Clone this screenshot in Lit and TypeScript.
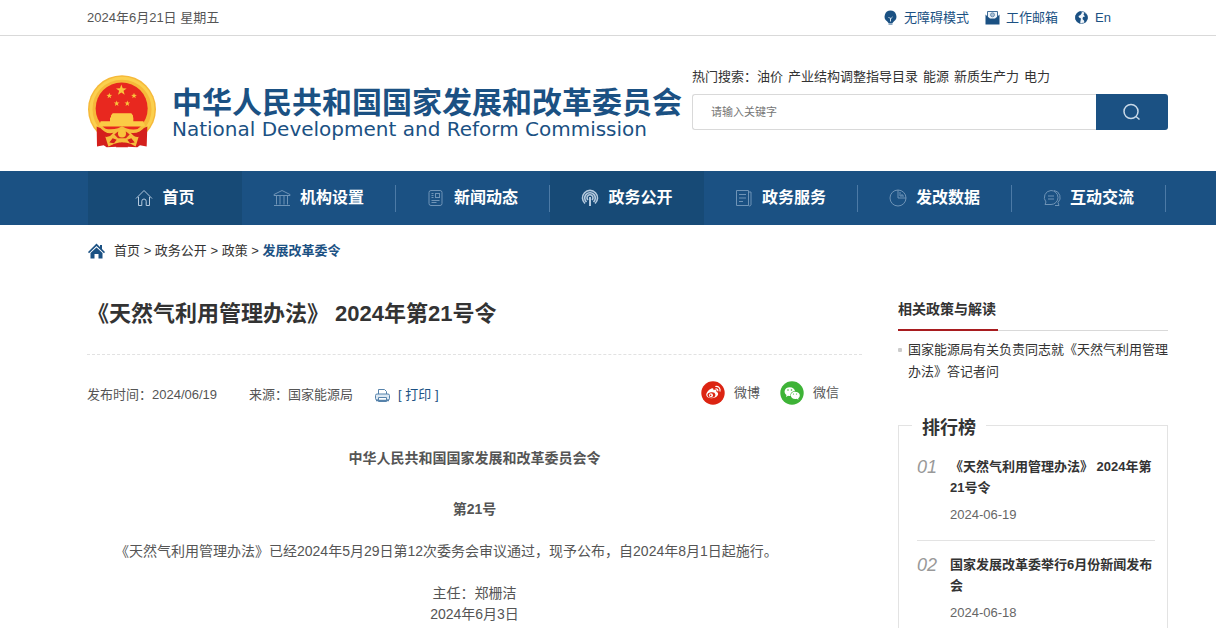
import { LitElement, html, css, svg } from "lit";
import { customElement } from "lit/decorators.js";
import { classMap } from "lit/directives/class-map.js";

const STAR = "M0-10 2.4-3.2 9.5-3.1 3.8 1.2 5.9 8.1 0 4 -5.9 8.1 -3.8 1.2 -9.5-3.1 -2.4-3.2Z";

const star = (x: number, y: number, s: number) =>
  svg`<path d=${STAR} fill="#f9c43c" transform="translate(${x} ${y}) scale(${s})"/>`;

const emblem = html`<svg class="emblem" viewBox="0 0 204 218" role="img" aria-label="国徽">
  <circle cx="102" cy="102" r="102" fill="#f6b93a"/>
  <circle cx="102" cy="102" r="93" fill="none" stroke="#fbd04e" stroke-width="9"/>
  <circle cx="101" cy="100" r="78" fill="#e8281f"/>
  ${star(100, 45, 1.7)}${star(64, 62, 0.9)}${star(138, 62, 0.9)}${star(86, 85, 0.9)}${star(118, 85, 0.9)}
  <path d="M74 114h56l5 7v6H69v-6z M66 127h70v12H66z M38 138h128l6 16H32z" fill="#fbcb45"/>
  <path d="M26 154c20 10 38 14 55 12l21-10 21 10c18 2 36-3 55-12l-2 60-20-4-8 6-46-2-46 2-9-6-20 4z" fill="#d41f1c"/>
  <path d="M34 153c22 12 40 11 56 6l12-6 12 6c18 6 38 5 58-6-12 16-28 23-44 20 8 10 16 14 24 12l-9 29c-12-6-18-12-41-12s-29 8-41 12l-9-29c10 1 16-2 24-12-16 4-30-2-42-20z" fill="#f6bd3d"/>
  <path d="M79 178l10-8h26l10 8-11 11H90z" fill="#d92a1d"/>
  <circle cx="102" cy="175" r="12" fill="#f9c43c"/>
  <path d="M74 189l12 5-8 10-14-2z M130 189l-12 5 8 10 14-2z M86 208l16-6 16 6 2 8H84z" fill="#d41f1c"/>
</svg>`;

const bulb = html`<svg class="ico" viewBox="0 0 15 15" aria-hidden="true">
  <path d="M7.500.5a6 6 0 0 0-3.500 10.800L5.500 13h4l1.500-1.700A6 6 0 0 0 7.500.5z" fill="#1b5183"/>
  <path d="M5.500 7l1.300 1.300h1.400L9.500 7M7.500 8.500v3" stroke="#dbe6f0" fill="none"/>
  <path d="M5.500 14h4" stroke="#1b5183"/></svg>`;

const mail = html`<svg class="ico" viewBox="0 0 15 15" aria-hidden="true">
  <path d="M2.500 8V1.500h10V8" fill="#eef4fa" stroke="#3f6d98"/>
  <circle cx="7.500" cy="4.800" r="2" fill="#a9bfd4" stroke="#6d8fb1"/>
  <path d="M.5 4.500l2 2 2.500 2h5l2.500-2 2-2v10H.5z" fill="#1b5183"/></svg>`;

const globe = html`<svg class="ico" viewBox="0 0 15 15" aria-hidden="true">
  <circle cx="7.500" cy="7.500" r="6" fill="#f2f6fa" stroke="#5b82a8"/>
  <path d="M1.200 7.500A6.300 6.300 0 0 1 7 1.200l1 1.500L6.500 5l-2 1 .5 1.500 2 1-.5 2.500-.5 2.500C3 12.800 1.200 10 1.200 7.500z M10.500 2.500l2.500 2.500.8 3-1.800 4-1.500 1-.5-2.500-1.500-1.500.5-2 2-.5L9.500 4.500z" fill="#1b5183"/></svg>`;

const navIcons = {
  home: svg`<path d="M1 9.500L9 1.500l8 8M3.500 8v8.500h3.300v-4.300a2.200 2.200 0 0 1 4.400 0v4.300h3.300V8"/>`,
  bank: svg`<path d="M1 5.500L9 1.500l8 4v1H1zM3.500 7v8.500M7 7v8.500M11 7v8.500M14.500 7v8.500M1 16.500h16"/>`,
  news: svg`<rect x="2" y="1.500" width="13" height="15" rx="2"/><rect x="8.500" y="4.500" width="4" height="4"/><path d="M4.500 4.500h2M4.500 6.500h2M4.500 8.500h2M4.500 11.500h8M4.500 13.500h5"/>`,
  signal: svg`<path d="M4 14.500a7.500 7.500 0 1 1 10 0M5.500 13a5.300 5.300 0 1 1 7 0M7 11a3 3 0 1 1 4 0" stroke-width="1.600"/><path d="M9 8v9" stroke-width="2"/>`,
  paper: svg`<path d="M1.500 1.500h12v15h-12zM13.500 3H16v12a1.500 1.500 0 0 1-2.500 1.500M4 5.500h7M4 9h7M4 12.500h4"/>`,
  pie: svg`<circle cx="9" cy="9" r="8"/><path d="M9 1v8h8M11 3v4h4M13 5v2"/>`,
  chat: svg`<path d="M8 1.500a7 7 0 1 1 0 14H2l1-2.500a7 7 0 0 1 5-11.500zM5 7h6M5 10h6M11 1.500a7 7 0 0 1 4 12l1 3h-4"/>`,
};

const NAV: { text: string; icon: keyof typeof navIcons; on?: boolean }[] = [
  { text: "首页", icon: "home", on: true },
  { text: "机构设置", icon: "bank" },
  { text: "新闻动态", icon: "news" },
  { text: "政务公开", icon: "signal", on: true },
  { text: "政务服务", icon: "paper" },
  { text: "发改数据", icon: "pie" },
  { text: "互动交流", icon: "chat" },
];

const HOT = ["油价", "产业结构调整指导目录", "能源", "新质生产力", "电力"];

const RANK = [
  { title: "《天然气利用管理办法》 2024年第21号令", date: "2024-06-19" },
  { title: "国家发展改革委举行6月份新闻发布会", date: "2024-06-18" },
];

const base = css`
  * { box-sizing: border-box; margin: 0; padding: 0; }
  a { color: inherit; text-decoration: none; }
  ul, ol { list-style: none; }
`;

@customElement("site-header")
class SiteHeader extends LitElement {
  static styles = [base, css`
    :host { display: block; }
    .top { display: flex; align-items: center; height: 36px; padding: 0 105px 0 87px; border-bottom: 1px solid #d9d9d9; color: #555; }
    .tools { display: flex; gap: 16px; margin-left: auto; color: #1b5183; }
    .tools a { display: flex; align-items: center; gap: 6px; }
    .ico { width: 15px; height: 15px; }
    .head { display: flex; align-items: flex-start; justify-content: space-between; height: 135px; padding: 32px 48px 0 88px; }
    .logo { display: flex; gap: 16px; padding-top: 7px; white-space: nowrap; color: #1b5183; }
    .emblem { width: 68px; height: 73px; }
    .names { padding-top: 13px; }
    .cn { font-size: 30px; line-height: 30px; font-weight: 700; }
    .en { font: 20px/22px "DejaVu Sans", sans-serif; }
    .search { width: 476px; flex: none; }
    .hot { display: flex; gap: 5px; line-height: 18px; margin-bottom: 8px; color: #333; }
    .hot span { margin-right: -5px; }
    form { display: flex; height: 36px; }
    input { flex: 1; min-width: 0; border: 1px solid #d9d9d9; border-right: 0; border-radius: 3px 0 0 3px; padding: 0 18px; font: inherit; font-size: 11px; outline: 0; }
    input::placeholder { color: #757575; }
    button { width: 72px; border: 0; border-radius: 0 3px 3px 0; background: #1b5183; display: grid; place-items: center; }
    button svg { width: 18px; height: 18px; }
    nav { background: #1b5183; padding: 0 48px 0 88px; }
    .menu { display: flex; }
    .menu li { flex: 0 1 154px; height: 54px; display: flex; align-items: center; }
    .menu li.on { background: #174a76; }
    .menu a { flex: 1; display: flex; align-items: center; justify-content: center; gap: 9px; color: #fff; font-size: 16px; font-weight: 700; white-space: nowrap; }
    .menu li:not(.on)::after { content: ""; width: 1px; height: 27px; background: #4c7aa6; }
    .menu svg { width: 18px; height: 18px; fill: none; stroke: #6f94b7; }
    .menu .on svg { stroke: #b5cadf; }
  `];
  render() {
    return html`
      <div class="top">
        <span>2024年6月21日 星期五</span>
        <div class="tools">
          <a href="#">${bulb}无障碍模式</a><a href="#">${mail}工作邮箱</a><a href="#">${globe}En</a>
        </div>
      </div>
      <header class="head">
        <a class="logo" href="#">${emblem}
          <div class="names">
            <div class="cn">中华人民共和国国家发展和改革委员会</div>
            <div class="en">National Development and Reform Commission</div>
          </div>
        </a>
        <div class="search">
          <div class="hot"><span>热门搜索：</span>${HOT.map((h) => html`<a href="#">${h}</a>`)}</div>
          <form @submit=${(e: Event) => e.preventDefault()}>
            <input type="text" aria-label="搜索" placeholder="请输入关键字">
            <button aria-label="搜索"><svg viewBox="0 0 18 18" fill="none" stroke="#c9d9e8" stroke-width="1.500"><circle cx="8" cy="8.500" r="7"/><path d="M13 13.500l3.500 3"/></svg></button>
          </form>
        </div>
      </header>
      <nav aria-label="主导航"><ul class="menu">
        ${NAV.map((n) => html`<li class=${classMap({ on: !!n.on })}>
          <a href="#"><svg viewBox="0 0 18 18" aria-hidden="true">${navIcons[n.icon]}</svg>${n.text}</a></li>`)}
      </ul></nav>`;
  }
}

@customElement("article-view")
class ArticleView extends LitElement {
  static styles = [base, css`
    :host { display: block; color: #555; }
    h1 { color: #333; font-size: 22px; line-height: 32px; padding-bottom: 24px; border-bottom: 1px dashed #e2e2e2; }
    .meta { display: flex; align-items: center; height: 76px; padding-right: 23px; line-height: 20px; }
    .info { display: flex; align-items: center; padding-top: 4px; }
    .source { margin-left: 32px; }
    .print { display: flex; align-items: center; gap: 8px; margin-left: 22px; color: #1b5183; }
    .print svg { width: 15px; height: 15px; }
    .share { display: flex; gap: 20px; margin-left: auto; }
    .share a { display: flex; align-items: center; gap: 9px; }
    .share svg { width: 24px; height: 24px; }
    .body { font-size: 14px; line-height: 21px; padding-top: 17px; text-align: center; }
    .body h2 { font-size: 14px; }
    .num { margin: 30px 0 21px; font-weight: 700; }
    .text { text-align: left; text-indent: 28px; margin-bottom: 21px; }
  `];
  render() {
    return html`
      <h1>《天然气利用管理办法》 2024年第21号令</h1>
      <div class="meta">
        <div class="info">
          <span>发布时间：2024/06/19</span><span class="source">来源：国家能源局</span>
          <a class="print" href="#"><svg viewBox="0 0 15 15" fill="none" stroke="#5783ab" aria-hidden="true"><path d="M3.500 6V1.500h6l2 2V6" fill="#fff"/><rect x=".5" y="6" width="14" height="6" rx="1.500" fill="#dce8f3"/><path d="M3.500 9.500h8v4h-8z" fill="#fff"/><path d="M1 12.500h13" stroke-width="1.500"/></svg>[ 打印 ]</a>
        </div>
        <div class="share">
          <a href="#"><svg viewBox="0 0 24 24" aria-hidden="true"><circle cx="12" cy="12" r="11.700" fill="#dc2412"/>
            <path d="M10.500 7.500c1.500-.5 2.300.2 1.900 1.700 2-.8 3.600-.2 3 1.500 3 1.300 1.800 4.300-.8 5.600-3.500 1.700-8.800 1.200-9.300-2-.4-2.500 2.800-6 5.200-6.800z" fill="#fff"/>
            <ellipse cx="10.400" cy="14" rx="4" ry="2.800" transform="rotate(-8 10.400 14)" fill="#dc2412"/><circle cx="10" cy="14.200" r="2" fill="#fff"/><circle cx="9.600" cy="14.400" r=".8" fill="#dc2412"/>
            <path d="M14.300 5.500c3.300-.5 5.500 2 4.600 5M14.500 7.800c1.700-.2 2.700 1 2.200 2.400" fill="none" stroke="#fff" stroke-width="1.200"/></svg>微博</a>
          <a href="#"><svg viewBox="0 0 24 24" aria-hidden="true"><circle cx="12" cy="12" r="11.700" fill="#3eb337"/>
            <path d="M9.800 6.300c3 0 5 1.800 5.200 4-3 0-5 2-4.500 4.700-.9.100-1.600 0-2.400-.2L6 16l.5-2C3 11.500 4.500 6.300 9.800 6.300z" fill="#fff"/>
            <path d="M15 10.700c5 0 6.200 4.500 3.200 6.500l.3 1.500-1.700-.9c-3.300.8-6-1-6-3.500 0-2 1.700-3.600 4.200-3.600z" fill="#fff"/>
            <g fill="#3eb337"><circle cx="8" cy="9" r=".8"/><circle cx="11.500" cy="9" r=".8"/><circle cx="13.500" cy="13" r=".6"/><circle cx="16.500" cy="13" r=".6"/></g></svg>微信</a>
        </div>
      </div>
      <div class="body">
        <h2>中华人民共和国国家发展和改革委员会令</h2>
        <p class="num">第21号</p>
        <p class="text">《天然气利用管理办法》已经2024年5月29日第12次委务会审议通过，现予公布，自2024年8月1日起施行。</p>
        <p>主任：郑栅洁</p>
        <p>2024年6月3日</p>
      </div>`;
  }
}

@customElement("side-panel")
class SidePanel extends LitElement {
  static styles = [base, css`
    :host { display: flex; flex-direction: column; color: #333; }
    .related { display: flex; border-bottom: 1px solid #d9d9d9; }
    .related h2 { font-size: 14px; line-height: 20px; padding: 0 2px 10px 0; margin-bottom: -1px; border-bottom: 2px solid #a81c1f; }
    .links { line-height: 22px; padding-top: 8px; }
    .links li { display: flex; gap: 6px; }
    .links li::before { content: ""; flex: none; width: 4px; height: 4px; margin-top: 9px; border-radius: 1px; background: #ccc; }
    .rank { flex: 1; margin-top: 42px; border: 1px solid #e3e3e3; border-bottom: 0; padding: 0 12px 0 18px; }
    .rank h2 { width: max-content; font-size: 18px; line-height: 26px; margin: -11px 0 15px -5px; padding: 0 10px; background: #fff; }
    .rank li { display: flex; gap: 13px; padding-bottom: 15px; margin-bottom: 13px; border-bottom: 1px solid #e3e3e3; }
    .rank li:last-child { border: 0; margin: 0; padding-bottom: 0; }
    .no { flex: none; width: 20px; font-size: 18px; line-height: 22px; font-style: italic; color: #999; }
    .rank h3 { font-size: 13px; line-height: 21px; margin-bottom: 6px; }
    .rank time { display: block; line-height: 21px; color: #666; }
  `];
  render() {
    return html`
      <div class="related"><h2>相关政策与解读</h2></div>
      <ul class="links"><li><a href="#">国家能源局有关负责同志就《天然气利用管理办法》答记者问</a></li></ul>
      <section class="rank">
        <h2>排行榜</h2>
        <ol>${RANK.map((r, i) => html`<li><span class="no">0${i + 1}</span>
          <div><h3><a href="#">${r.title}</a></h3><time datetime=${r.date}>${r.date}</time></div></li>`)}</ol>
      </section>`;
  }
}

@customElement("app-root")
class AppRoot extends LitElement {
  static styles = [base, css`
    :host { display: flex; flex-direction: column; min-height: 100vh; background: #fff; font: 13px/20px "Liberation Sans", "Noto Sans CJK SC", sans-serif; }
    .crumbs { display: flex; align-items: center; gap: 9px; padding: 16px 48px 0 88px; color: #333; }
    .crumbs svg { width: 17px; height: 16px; }
    .crumbs .here { color: #1b5183; font-weight: 700; }
    main { flex: 1; display: flex; justify-content: space-between; gap: 36px; padding: 37px 48px 0 87px; }
    article-view { flex: 1; min-width: 0; }
    side-panel { flex: none; width: 270px; padding-top: 1px; }
  `];
  render() {
    return html`
      <site-header></site-header>
      <div class="crumbs">
        <svg viewBox="0 0 17 16" fill="#1b5183" aria-hidden="true"><path d="M8.500.5L12 4V2h2v4l3 3-1 1.200-7.500-7.200L1 10.200 0 9z"/><path d="M8.500 4.500L14.500 10v5.500H10.500V11h-4v4.500h-4V10z"/></svg>
        <span><a href="#">首页</a> &gt; <a href="#">政务公开</a> &gt; <a href="#">政策</a> &gt; <a class="here" href="#">发展改革委令</a></span>
      </div>
      <main><article-view></article-view><side-panel></side-panel></main>`;
  }
}
